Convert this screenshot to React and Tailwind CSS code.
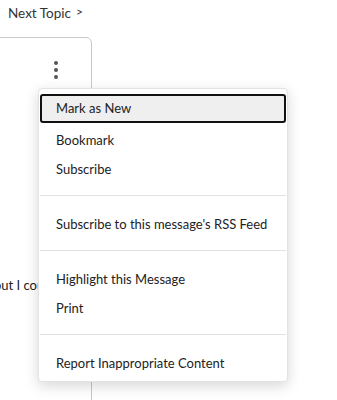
const menuGroups = [
  ['Mark as New', 'Bookmark', 'Subscribe'],
  ["Subscribe to this message's RSS Feed"],
  ['Highlight this Message', 'Print'],
  ['Report Inappropriate Content'],
];

const App = () => {
  return (
    <div className="relative h-[400px] w-[337px] overflow-hidden bg-white text-[#222] font-['Lato',sans-serif]">
      {/* Next topic link */}
      <div className="flex h-[37px] items-start pl-[8px] pt-[3px] text-[13.5px] text-[#333]">
        <span>Next Topic</span>
        <span className="ml-[5px] text-[12px]">&gt;</span>
      </div>

      {/* Message card (cut off on the left) */}
      <div className="-ml-[20px] h-[400px] w-[112px] rounded-tr-[6px] border border-[#c9c9c9]">
        <div className="flex justify-end pr-[33px] pt-[23px]">
          <div className="flex flex-col gap-[3px]">
            <span className="h-[4px] w-[4px] rounded-full bg-[#555]" />
            <span className="h-[4px] w-[4px] rounded-full bg-[#555]" />
            <span className="h-[4px] w-[4px] rounded-full bg-[#555]" />
          </div>
        </div>
        <p className="mt-[197px] whitespace-nowrap pl-[13px] text-[13px] text-[#222]">
          but I couldn't
        </p>
      </div>

      {/* Dropdown menu */}
      <div className="absolute left-[38px] top-[88px] w-[250px] rounded-[4px] border border-[#e3e3e3] bg-white px-[1px] shadow-[0_4px_14px_rgba(0,0,0,0.16)]">
        {menuGroups.map((group, gi) => (
          <div
            key={gi}
            className={
              gi === 0
                ? 'pt-[5px] pb-[11px]'
                : gi === menuGroups.length - 1
                ? 'border-t border-[#e2e2e2] pt-[14px] pb-[3px]'
                : 'border-t border-[#e2e2e2] pt-[14px] pb-[11px]'
            }
          >
            {group.map((item, ii) => (
              <div
                key={item}
                className={
                  gi === 0 && ii === 0
                    ? 'mb-[3px] flex h-[29px] items-center rounded-[3px] border-2 border-[#111] bg-[#efefef] pl-[14px] text-[13px]'
                    : 'flex h-[29px] items-center pl-[16px] text-[13px]'
                }
              >
                {item}
              </div>
            ))}
          </div>
        ))}
      </div>
    </div>
  );
};

export default App;
